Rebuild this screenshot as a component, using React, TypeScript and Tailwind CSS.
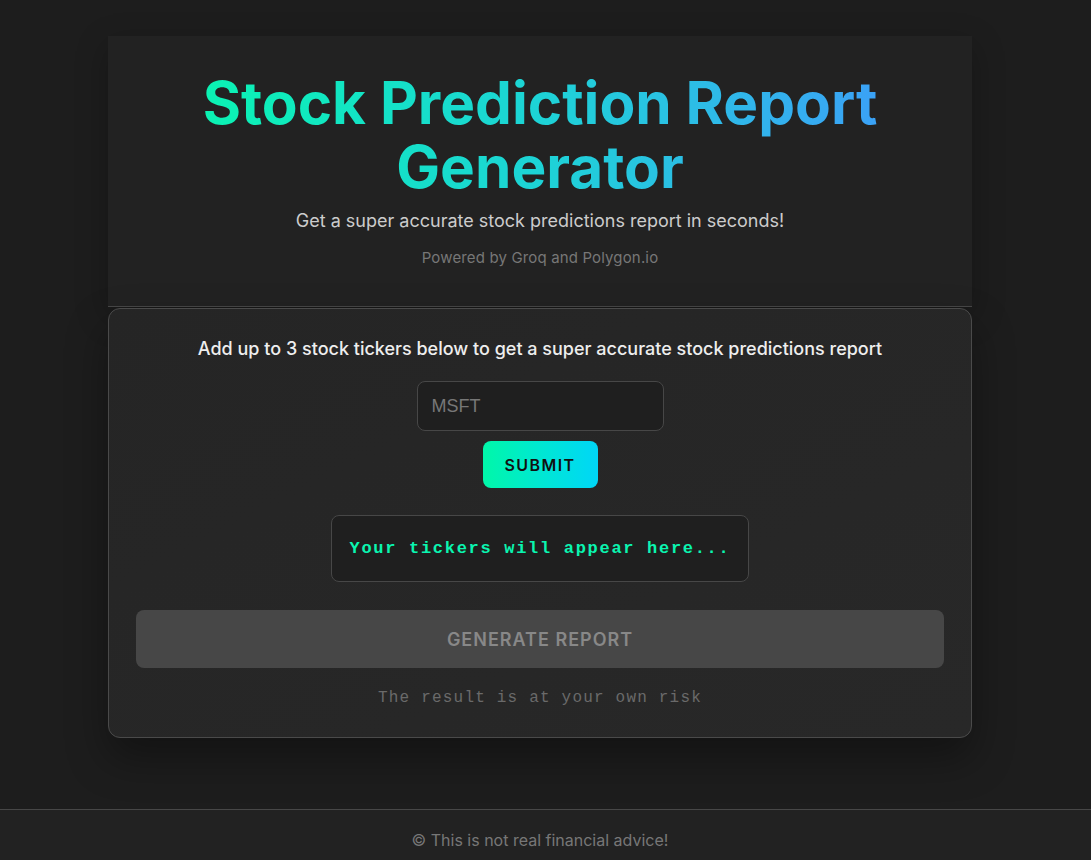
import React from "react";

export default function App() {
  return (
    <div
      className="min-h-screen flex flex-col bg-[#1d1d1d] text-white"
      style={{ fontFamily: "Inter, 'Noto Sans', sans-serif" }}
    >
      <main className="flex-1 flex flex-col items-center pt-9 pb-[71px] pr-[11px]">
        <div className="w-[864px] flex flex-col">
          <header className="bg-[#222222] border-b border-[#474747] pt-[35px] pb-[37px] flex flex-col items-center text-center shadow-[0_10px_30px_rgba(0,0,0,0.25)]">
            <h1 className="text-[58.5px] font-bold leading-[64px] bg-gradient-to-r from-[#0af5b0] via-[#1dd3d6] to-[#3c9ef8] bg-clip-text text-transparent inline-block max-w-[720px]">
              Stock Prediction Report Generator
            </h1>
            <p className="mt-2 text-[18px] leading-[28px] text-[#cccccc]">
              Get a super accurate stock predictions report in seconds!
            </p>
            <p className="mt-3 text-[15px] leading-[22px] tracking-[0.15px] text-[#777777]">
              Powered by Groq and Polygon.io
            </p>
          </header>
          <section className="mt-px bg-[#262626] bg-gradient-to-br from-[#252525] to-[#282828] border border-[#4a4a4a] rounded-xl px-[27px] pt-[27px] pb-[30px] flex flex-col items-center shadow-[0_20px_40px_rgba(0,0,0,0.35)]">
            <p className="text-[18px] font-medium leading-[26px] text-[#eeeeee]">
              Add up to 3 stock tickers below to get a super accurate stock predictions report
            </p>
            <input
              placeholder="MSFT"
              className="mt-[19px] w-[247px] h-[50px] rounded-lg bg-[#1f1f1f] border border-[#474747] px-[14px] text-[18px] text-white placeholder:text-[#777777] outline-none"
              style={{ fontFamily: "'Liberation Sans', Arial, sans-serif" }}
            />
            <button className="mt-[10px] w-[115px] h-[47px] rounded-lg bg-gradient-to-r from-[#00f7a8] to-[#00d6f7] text-[#111111] text-[16px] font-semibold tracking-[1.4px]">
              SUBMIT
            </button>
            <div className="mt-[27px] w-[418px] h-[67px] rounded-lg bg-[#1f1f1f] border border-[#474747] flex items-center justify-center">
              <span
                className="text-[17px] font-bold tracking-[1.7px] text-[#0af5b0]"
                style={{ fontFamily: "'Liberation Mono', 'DejaVu Sans Mono', monospace" }}
              >
                Your tickers will appear here...
              </span>
            </div>
            <button className="mt-[28px] w-full h-[58px] rounded-lg bg-[#474747] text-[#888888] text-[18px] font-semibold tracking-[1px]">
              GENERATE REPORT
            </button>
            <p
              className="mt-[21px] text-[16px] leading-[18px] tracking-[1.2px] text-[#6a6a6a]"
              style={{ fontFamily: "'Liberation Mono', 'DejaVu Sans Mono', monospace" }}
            >
              The result is at your own risk
            </p>
          </section>
        </div>
      </main>
      <footer className="h-[51px] border-t border-[#474747] bg-[#222222] flex items-start justify-center pt-[19px] pr-[11px] text-[16px] leading-[22px] text-[#777777]">
        © This is not real financial advice!
      </footer>
    </div>
  );
}
